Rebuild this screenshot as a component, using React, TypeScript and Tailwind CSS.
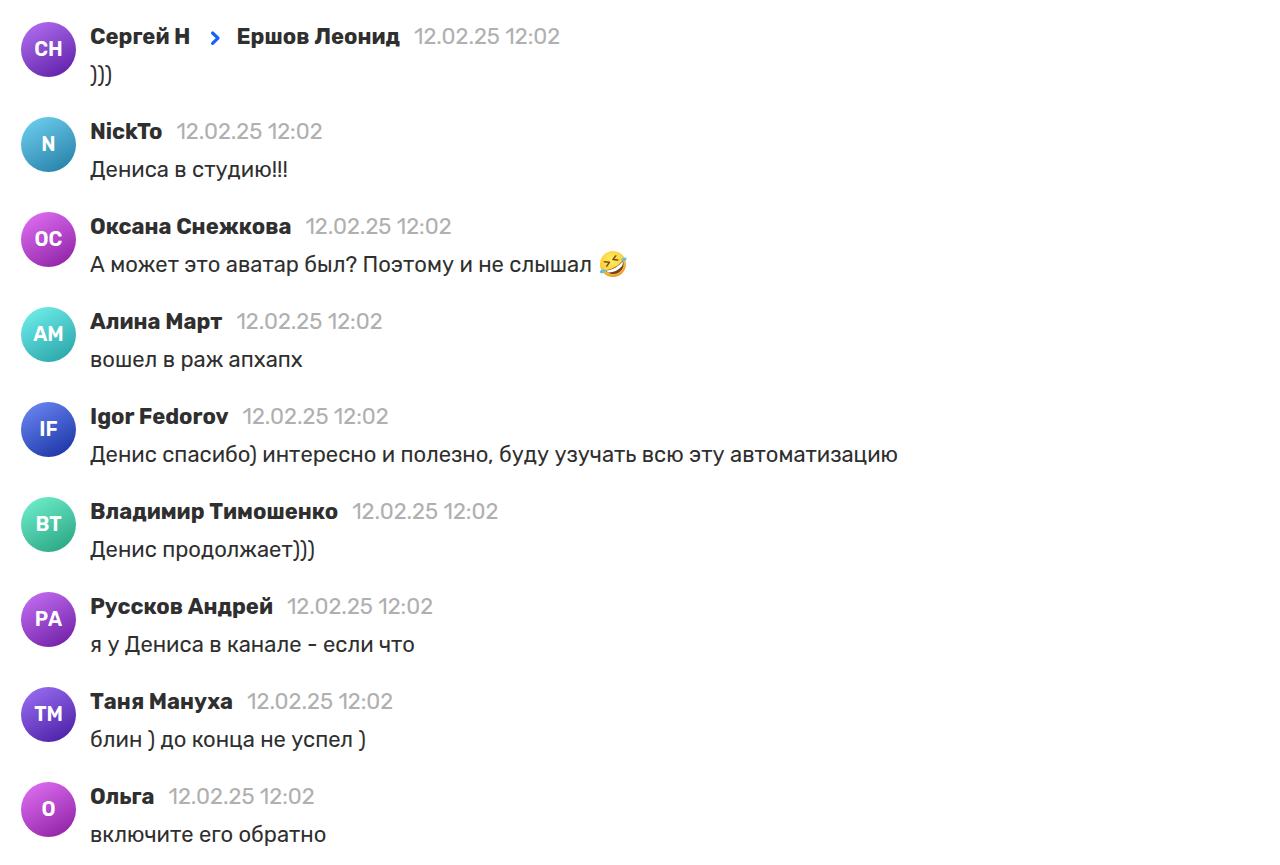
type Message = {
  initials: string;
  name: string;
  to?: string;
  text: string;
  laugh?: boolean;
  color: string;
};

const messages: Message[] = [
  { initials: "СН", name: "Сергей Н", to: "Ершов Леонид", text: ")))", color: "from-[#b872f4] to-[#5a14a4]" },
  { initials: "N", name: "NickTo", text: "Дениса в студию!!!", color: "from-[#72d4f4] to-[#1f7ba2]" },
  { initials: "ОС", name: "Оксана Снежкова", text: "А может это аватар был? Поэтому и не слышал", laugh: true, color: "from-[#e472f8] to-[#8a18a0]" },
  { initials: "АМ", name: "Алина Март", text: "вошел в раж апхапх", color: "from-[#72f4f0] to-[#229fa4]" },
  { initials: "IF", name: "Igor Fedorov", text: "Денис спасибо) интересно и полезно, буду узучать всю эту автоматизацию", color: "from-[#728cf8] to-[#182ca0]" },
  { initials: "ВТ", name: "Владимир Тимошенко", text: "Денис продолжает)))", color: "from-[#72f4d0] to-[#22a080]" },
  { initials: "РА", name: "Руссков Андрей", text: "я у Дениса в канале - если что", color: "from-[#c872f8] to-[#6c14a0]" },
  { initials: "ТМ", name: "Таня Мануха", text: "блин ) до конца не успел )", color: "from-[#a072f8] to-[#4814a0]" },
  { initials: "О", name: "Ольга", text: "включите его обратно", color: "from-[#e472f8] to-[#8a18a0]" },
];

function ReplyArrow() {
  return (
    <svg viewBox="0 0 18 18" className="size-[18px]" fill="none" stroke="#1463f3" strokeWidth="3.2" strokeLinecap="round" strokeLinejoin="round" aria-hidden="true">
      <path d="M7.6 5 13 10.2 7.6 15.4" />
    </svg>
  );
}

function LaughingFace() {
  return (
    <svg viewBox="0 0 28 28" className="ml-0.5 inline-block size-7 align-[-6px]" role="img" aria-label="🤣">
      <defs>
        <radialGradient id="face" cx="0.45" cy="0.35" r="0.65">
          <stop offset="0" stopColor="#ffee62" />
          <stop offset="0.7" stopColor="#fbcf3d" />
          <stop offset="1" stopColor="#e8952a" />
        </radialGradient>
      </defs>
      <circle cx="14" cy="14" r="13" fill="url(#face)" />
      <path d="M6.2 20.3C12 20 20 16 23.8 10.2 26 16 23.2 20.6 18.8 22.9 14.4 25 9 24 6.2 20.3Z" fill="#71411f" />
      <path d="M7 20.5C13 20.2 20.3 16.2 23.6 11.2 24.1 13.4 23.7 14.8 22.8 16.2 19 20.6 13.5 22.8 9.2 22.4Z" fill="#fff" />
      <path d="m5.4 11.8 5 .5-2.6 3.8M16.8 5.9l-2.9 3.6 4.9.5" fill="none" stroke="#7a4a12" strokeWidth="1.5" strokeLinecap="round" strokeLinejoin="round" />
      <path d="M22 9.8C23.5 7.3 26.6 6.8 27.6 8.3 28 10.6 25 12.2 22 9.8ZM7.2 20.3C4.5 18.8 1.2 19.8.8 21.8 1 24.2 5.4 24 7.2 20.3Z" fill="#62bfec" />
    </svg>
  );
}

export default function App() {
  return (
    <main className="bg-white px-[21px] pt-[22px] font-['Rubik','Roboto',sans-serif] text-[22px] text-[#2f2f2f]">
      <ul>
        {messages.map((m) => (
          <li key={m.name} className="flex gap-[14px] pb-[27px]">
            <div className={`flex size-[55px] shrink-0 items-center justify-center rounded-full bg-linear-150 pb-0.5 text-xl font-semibold text-white ${m.color}`}>{m.initials}</div>
            <div>
              <div className="flex items-center gap-[14px] leading-[30px] font-bold">
                <span>{m.name}</span>
                {m.to && <ReplyArrow />}
                {m.to && <span>{m.to}</span>}
                <time className="font-normal text-[#b0b0b0]">12.02.25 12:02</time>
              </div>
              <p className="mt-2 leading-[30px]">
                {m.text} {m.laugh && <LaughingFace />}
              </p>
            </div>
          </li>
        ))}
      </ul>
    </main>
  );
}
